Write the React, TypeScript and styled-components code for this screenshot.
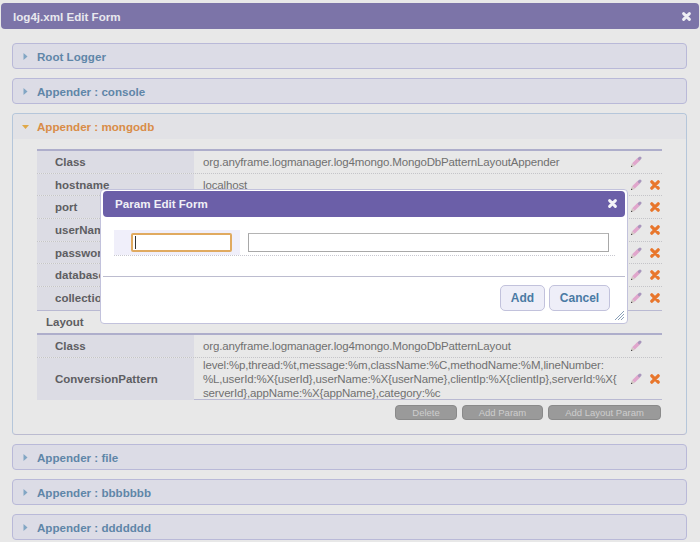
import React from "react";
import styled, { createGlobalStyle } from "styled-components";

const Global = createGlobalStyle`
  html, body { margin: 0; padding: 0; background: #e8e8e8; }
  body { font-family: "Liberation Sans", Arial, sans-serif; font-size: 12px; color: #666; width: 700px; height: 542px; overflow: hidden; }
`;

const Page = styled.div`
  position: relative;
  width: 700px;
  height: 542px;
  padding-top: 3px;
  box-sizing: border-box;
  overflow: hidden;
  background: #e8e8e8;
`;
const TitleBar = styled.div`
  height: 26px;
  margin: 0 1px;
  padding: 0 8px 0 12px;
  background: #7c74a8;
  border-radius: 4px;
  display: flex;
  align-items: center;
  justify-content: space-between;
  color: #e8e8ee;
  font-weight: bold;
  font-size: 11.6px;
`;
const Accordion = styled.div`
  margin: 14px 13px 0 12px;
  display: flex;
  flex-direction: column;
  gap: 9px;
`;
const Head = styled.div`
  padding: 1px 0 0 9px;
  height: 23px;
  border: 1px solid #b9b9d8;
  border-radius: 4px;
  background: #dcdce6;
  display: flex;
  align-items: center;
  gap: 8px;
  color: #5f86a8;
  font-weight: bold;
  font-size: 11.6px;
`;
const Panel = styled.div`
  height: 322px;
  box-sizing: border-box;
  border: 1px solid #b5c6da;
  border-bottom-color: #bbbbd0;
  border-radius: 4px;
  background: #e8e8e8;
`;
const PanelHead = styled.div`
  height: 25px;
  background: #e2e2e6;
  display: flex;
  align-items: center;
  padding-left: 9px;
  gap: 8px;
  color: #d98c48;
  font-weight: bold;
  font-size: 11.6px;
  border-radius: 4px 4px 0 0;
`;
const PanelBody = styled.div`
  margin: 10px 24px 0;
`;
const Table = styled.div`
  border-top: 2px solid #aeaecb;
  border-bottom: 1px solid #b9b9d2;
`;
const Row = styled.div<{ $h?: number; $last?: boolean }>`
  display: grid;
  grid-template-columns: 157px minmax(0, 1fr) 24px 14px;
  height: ${(p) => p.$h ?? 22.7}px;
  border-bottom: ${(p) => (p.$last ? "0" : "1px dotted #c4c4c8")};
  box-sizing: border-box;
  align-items: center;
`;
const Th = styled.div`
  align-self: stretch;
  background: #dcdce4;
  display: flex;
  align-items: center;
  padding-left: 18px;
  font-weight: bold;
  font-size: 11.5px;
  color: #5e5e62;
`;
const Td = styled.div`
  padding: 0 0 0 9px;
  font-size: 11.5px;
  line-height: 14px;
  color: #707070;
  letter-spacing: -0.15px;
  white-space: nowrap;
`;
const IconCell = styled.div`
  display: flex;
  justify-content: center;
  align-items: center;
`;
const SubTitle = styled.div`
  height: 22px;
  display: flex;
  align-items: center;
  padding-left: 9px;
  font-weight: bold;
  font-size: 11.5px;
  color: #5e5e62;
`;
const Actions = styled.div`
  display: flex;
  justify-content: flex-end;
  gap: 5px;
  margin-top: 5px;
  padding-right: 1px;
`;
const GreyButton = styled.div<{ $w: number }>`
  width: ${(p) => p.$w}px;
  height: 15px;
  box-sizing: border-box;
  border-radius: 4px;
  background: #9a9a9a;
  border: 1px solid #8a8a8a;
  color: #cdcdcd;
  font-size: 9.5px;
  display: flex;
  align-items: center;
  justify-content: center;
`;
const Modal = styled.div`
  position: absolute;
  left: 100px;
  top: 189px;
  width: 528px;
  height: 135px;
  box-sizing: border-box;
  background: #fff;
  border: 1px solid #c2c2dc;
  border-radius: 4px;
  padding: 0 2px;
`;
const ModalBar = styled.div`
  margin-top: 1px;
  height: 25px;
  padding: 0 8px 1px 12px;
  background: #6b5fa8;
  border-radius: 4px;
  display: flex;
  align-items: center;
  justify-content: space-between;
  color: #f0f0f6;
  font-weight: bold;
  font-size: 11.6px;
`;
const FormRow = styled.div`
  margin: 13px 10px 0 11px;
  height: 25px;
  border-bottom: 1px dotted #c8c8d0;
  display: flex;
`;
const FormLabel = styled.div`
  width: 126px;
  background: #f0effa;
  box-sizing: border-box;
  padding: 3px 0 0 17px;
`;
const FocusInput = styled.div`
  width: 101px;
  height: 19px;
  box-sizing: border-box;
  border: 2px solid #e0aa60;
  border-radius: 2px;
  background: #fff;
  display: flex;
  align-items: center;
  padding-left: 2px;
`;
const Caret = styled.div`
  width: 1px;
  height: 13px;
  background: #333;
`;
const TextInput = styled.div`
  margin: 3px 0 0 8px;
  width: 361px;
  height: 19px;
  box-sizing: border-box;
  border: 1px solid #a8a8a8;
  border-top-color: #b4b4b4;
  background: #fff;
`;
const Divider = styled.div`
  margin-top: 20px;
  height: 1px;
  background: #bcbccf;
`;
const ModalActions = styled.div`
  display: flex;
  justify-content: flex-end;
  gap: 4px;
  margin: 8px 15px 0 0;
`;
const ModalButton = styled.div<{ $w: number }>`
  width: ${(p) => p.$w}px;
  height: 26px;
  box-sizing: border-box;
  border: 1px solid #c2c2dc;
  border-radius: 5px;
  background: #eeeef8;
  color: #4a7aa4;
  font-weight: bold;
  font-size: 12px;
  display: flex;
  align-items: center;
  justify-content: center;
`;
const Grip = styled.svg`
  position: absolute;
  right: 2px;
  bottom: 2px;
`;

const Tri = ({ open }: { open?: boolean }) =>
  open ? (
    <svg width="7" height="7" viewBox="0 0 7 7"><path d="M0 2h7L3.5 6z" fill="#e0a848" /></svg>
  ) : (
    <svg width="7" height="7" viewBox="0 0 7 7"><path d="M1.5 0v7L5.5 3.5z" fill="#82a6c4" /></svg>
  );

const Close = ({ color = "#eeeef4", size = 9 }: { color?: string; size?: number }) => (
  <svg width={size} height={size} viewBox="0 0 10 10">
    <path d="M1.8 1.8l6.4 6.4M8.2 1.8L1.8 8.2" stroke={color} strokeWidth="3.2" strokeLinecap="round" />
  </svg>
);

const Pencil = () => (
  <svg width="12" height="12" viewBox="0 0 12 12">
    <path d="M3.4 8.6L9 3" stroke="#e0a6cc" strokeWidth="3.6" />
    <path d="M9.4 2.6l.6-.6" stroke="#a896bc" strokeWidth="3" strokeLinecap="round" />
    <path d="M1.9 7.2l2.9 2.9-3.8 1z" fill="#d0c4c0" />
    <path d="M1.3 9.5l1.2 1.2-1.5.4z" fill="#2c2c2c" />
  </svg>
);

const Del = () => <Close color="#e8762c" size={10} />;

type R = { k: string; v?: React.ReactNode; del?: boolean; h?: number; last?: boolean };

const Rows = ({ rows }: { rows: R[] }) => (
  <Table>
    {rows.map((r) => (
      <Row key={r.k} $h={r.h} $last={r.last}>
        <Th>{r.k}</Th>
        <Td>{r.v}</Td>
        <IconCell><Pencil /></IconCell>
        <IconCell>{r.del ? <Del /> : null}</IconCell>
      </Row>
    ))}
  </Table>
);

export default function App() {
  return (
    <Page>
      <Global />
      <TitleBar>
        log4j.xml Edit Form
        <Close />
      </TitleBar>
      <Accordion>
        <Head><Tri />Root Logger</Head>
        <Head><Tri />Appender : console</Head>
        <Panel>
          <PanelHead><Tri open />Appender : mongodb</PanelHead>
          <PanelBody>
            <Rows
              rows={[
                { k: "Class", v: "org.anyframe.logmanager.log4mongo.MongoDbPatternLayoutAppender" },
                { k: "hostname", v: "localhost", del: true },
                { k: "port", del: true },
                { k: "userName", del: true },
                { k: "password", del: true },
                { k: "database", del: true },
                { k: "collection", del: true, last: true },
              ]}
            />
            <SubTitle>Layout</SubTitle>
            <Rows
              rows={[
                { k: "Class", v: "org.anyframe.logmanager.log4mongo.MongoDbPatternLayout" },
                {
                  k: "ConversionPattern",
                  h: 41,
                  del: true,
                  last: true,
                  v: (
                    <>
                      level:%p,thread:%t,message:%m,className:%C,methodName:%M,lineNumber:
                      <br />
                      %L,userId:%X&#123;userId&#125;,userName:%X&#123;userName&#125;,clientIp:%X&#123;clientIp&#125;,serverId:%X&#123;
                      <br />
                      serverId&#125;,appName:%X&#123;appName&#125;,category:%c
                    </>
                  ),
                },
              ]}
            />
            <Actions>
              <GreyButton $w={62}>Delete</GreyButton>
              <GreyButton $w={81}>Add Param</GreyButton>
              <GreyButton $w={113}>Add Layout Param</GreyButton>
            </Actions>
          </PanelBody>
        </Panel>
        <Head><Tri />Appender : file</Head>
        <Head><Tri />Appender : bbbbbbb</Head>
        <Head><Tri />Appender : ddddddd</Head>
      </Accordion>
      <Modal>
        <ModalBar>
          Param Edit Form
          <Close color="#f4f4f8" />
        </ModalBar>
        <FormRow>
          <FormLabel>
            <FocusInput><Caret /></FocusInput>
          </FormLabel>
          <TextInput />
        </FormRow>
        <Divider />
        <ModalActions>
          <ModalButton $w={45}>Add</ModalButton>
          <ModalButton $w={61}>Cancel</ModalButton>
        </ModalActions>
        <Grip width="11" height="11" viewBox="0 0 11 11">
          <path d="M1 10L10 1M4 10L10 4M7 10L10 7" stroke="#8aa0b8" strokeWidth="1" />
        </Grip>
      </Modal>
    </Page>
  );
}
